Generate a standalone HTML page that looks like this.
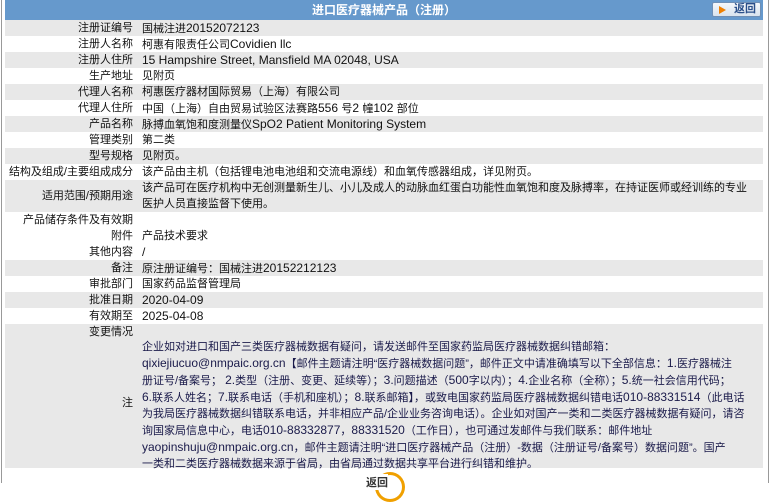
<!DOCTYPE html>
<html><head><meta charset="utf-8"><style>
body{margin:0;width:772px;height:483px;overflow:hidden;background:#fff;font-family:"Liberation Sans","Noto Sans CJK SC",sans-serif;font-size:11px;color:#111;position:relative}
.e{font-size:12px}
.lb{position:absolute;left:1px;top:0;width:1px;height:483px;background:#999}
.rb{position:absolute;left:768px;top:0;width:1px;height:483px;background:#999}
.hd{position:absolute;left:5px;top:0;width:758px;height:20px;background:#6699cc;color:#fff;font-weight:bold;text-align:center;line-height:20px;font-size:12px}
.bk{position:absolute;left:712px;top:2px;width:49px;height:15px;background:linear-gradient(#f4f7fb,#d9e3ee);border:1px solid #6f8fb5;border-radius:2px;box-sizing:border-box;font-size:11px;font-weight:bold;color:#2a4f8a;line-height:13px}
.bk i{position:absolute;left:6px;top:3px;width:0;height:0;border-left:7px solid #f08000;border-top:4px solid transparent;border-bottom:4px solid transparent}
.bk span{position:absolute;left:21px;top:0}
.r{position:absolute;left:5px;width:758px;height:16px;line-height:16px}
.g{background:#e8e8e8}
.l{position:absolute;right:630px;text-align:right;white-space:nowrap}
.v{position:absolute;left:137px;white-space:nowrap}
.note{position:absolute;left:137px;top:3px;line-height:16px;color:#1a1a4a;white-space:nowrap}
</style></head><body>
<div class="lb"></div><div class="rb"></div>
<div class="hd">进口医疗器械产品（注册）</div>
<div class="bk"><i></i><span>返回</span></div>
<div class="r g" style="top:20px"><span class="l">注册证编号</span><span class="v">国械注进<span class="e">20152072123</span></span></div>
<div class="r" style="top:36px"><span class="l">注册人名称</span><span class="v">柯惠有限责任公司<span class="e">Covidien llc</span></span></div>
<div class="r g" style="top:52px"><span class="l">注册人住所</span><span class="v e">15 Hampshire Street, Mansfield MA 02048, USA</span></div>
<div class="r" style="top:68px"><span class="l">生产地址</span><span class="v">见附页</span></div>
<div class="r g" style="top:84px"><span class="l">代理人名称</span><span class="v">柯惠医疗器材国际贸易（上海）有限公司</span></div>
<div class="r" style="top:100px"><span class="l">代理人住所</span><span class="v">中国（上海）自由贸易试验区法赛路<span class="e">556 </span>号<span class="e">2 </span>幢<span class="e">102 </span>部位</span></div>
<div class="r g" style="top:116px"><span class="l">产品名称</span><span class="v">脉搏血氧饱和度测量仪<span class="e">SpO2 Patient Monitoring System</span></span></div>
<div class="r" style="top:132px"><span class="l">管理类别</span><span class="v">第二类</span></div>
<div class="r g" style="top:148px"><span class="l">型号规格</span><span class="v">见附页。</span></div>
<div class="r" style="top:164px"><span class="l">结构及组成/主要组成成分</span><span class="v">该产品由主机（包括锂电池电池组和交流电源线）和血氧传感器组成，详见附页。</span></div>
<div class="r g" style="top:180px;height:32px"><span class="l" style="top:8px">适用范围/预期用途</span><span class="v">该产品可在医疗机构中无创测量新生儿、小儿及成人的动脉血红蛋白功能性血氧饱和度及脉搏率，在持证医师或经训练的专业<br>医护人员直接监督下使用。</span></div>
<div class="r" style="top:212px"><span class="l">产品储存条件及有效期</span></div>
<div class="r" style="top:228px"><span class="l">附件</span><span class="v">产品技术要求</span></div>
<div class="r" style="top:244px"><span class="l">其他内容</span><span class="v e">/</span></div>
<div class="r g" style="top:260px"><span class="l">备注</span><span class="v">原注册证编号：国械注进<span class="e">20152212123</span></span></div>
<div class="r" style="top:276px"><span class="l">审批部门</span><span class="v">国家药品监督管理局</span></div>
<div class="r g" style="top:292px"><span class="l">批准日期</span><span class="v e">2020-04-09</span></div>
<div class="r" style="top:308px"><span class="l">有效期至</span><span class="v e">2025-04-08</span></div>
<div class="r g" style="top:324px;height:144px"><span class="l" style="top:0">变更情况</span><span class="l" style="top:71px">注</span>
<div class="note" style="top:15px">企业如对进口和国产三类医疗器械数据有疑问，请发送邮件至国家药监局医疗器械数据纠错邮箱：<br><span class="e">qixiejiucuo@nmpaic.org.cn</span>【邮件主题请注明“医疗器械数据问题”，邮件正文中请准确填写以下全部信息：<span class="e">1.</span>医疗器械注<br>册证号/备案号； <span class="e">2.</span>类型（注册、变更、延续等）；<span class="e">3.</span>问题描述（<span class="e">500</span>字以内）；<span class="e">4.</span>企业名称（全称）；<span class="e">5.</span>统一社会信用代码；<br><span class="e">6.</span>联系人姓名；<span class="e">7.</span>联系电话（手机和座机）；<span class="e">8.</span>联系邮箱】，或致电国家药监局医疗器械数据纠错电话<span class="e">010-88331514</span>（此电话<br>为我局医疗器械数据纠错联系电话，并非相应产品/企业业务咨询电话）。企业如对国产一类和二类医疗器械数据有疑问，请咨<br>询国家局信息中心，电话<span class="e">010-88332877</span>，<span class="e">88331520</span>（工作日），也可通过发邮件与我们联系：邮件地址<br><span class="e">yaopinshuju@nmpaic.org.cn</span>，邮件主题请注明“进口医疗器械产品（注册）-数据（注册证号/备案号）数据问题”。国产<br>一类和二类医疗器械数据来源于省局，由省局通过数据共享平台进行纠错和维护。</div></div>
<div style="position:absolute;left:375px;top:472px;width:30px;height:30px;border-radius:50%;background:#f0a000"></div>
<div style="position:absolute;left:378px;top:475px;width:24px;height:24px;border-radius:50%;background:#fff"></div>
<div style="position:absolute;left:366px;top:474px;font-size:11px;font-weight:bold;color:#333;background:#fff">返回</div>
</body></html>
